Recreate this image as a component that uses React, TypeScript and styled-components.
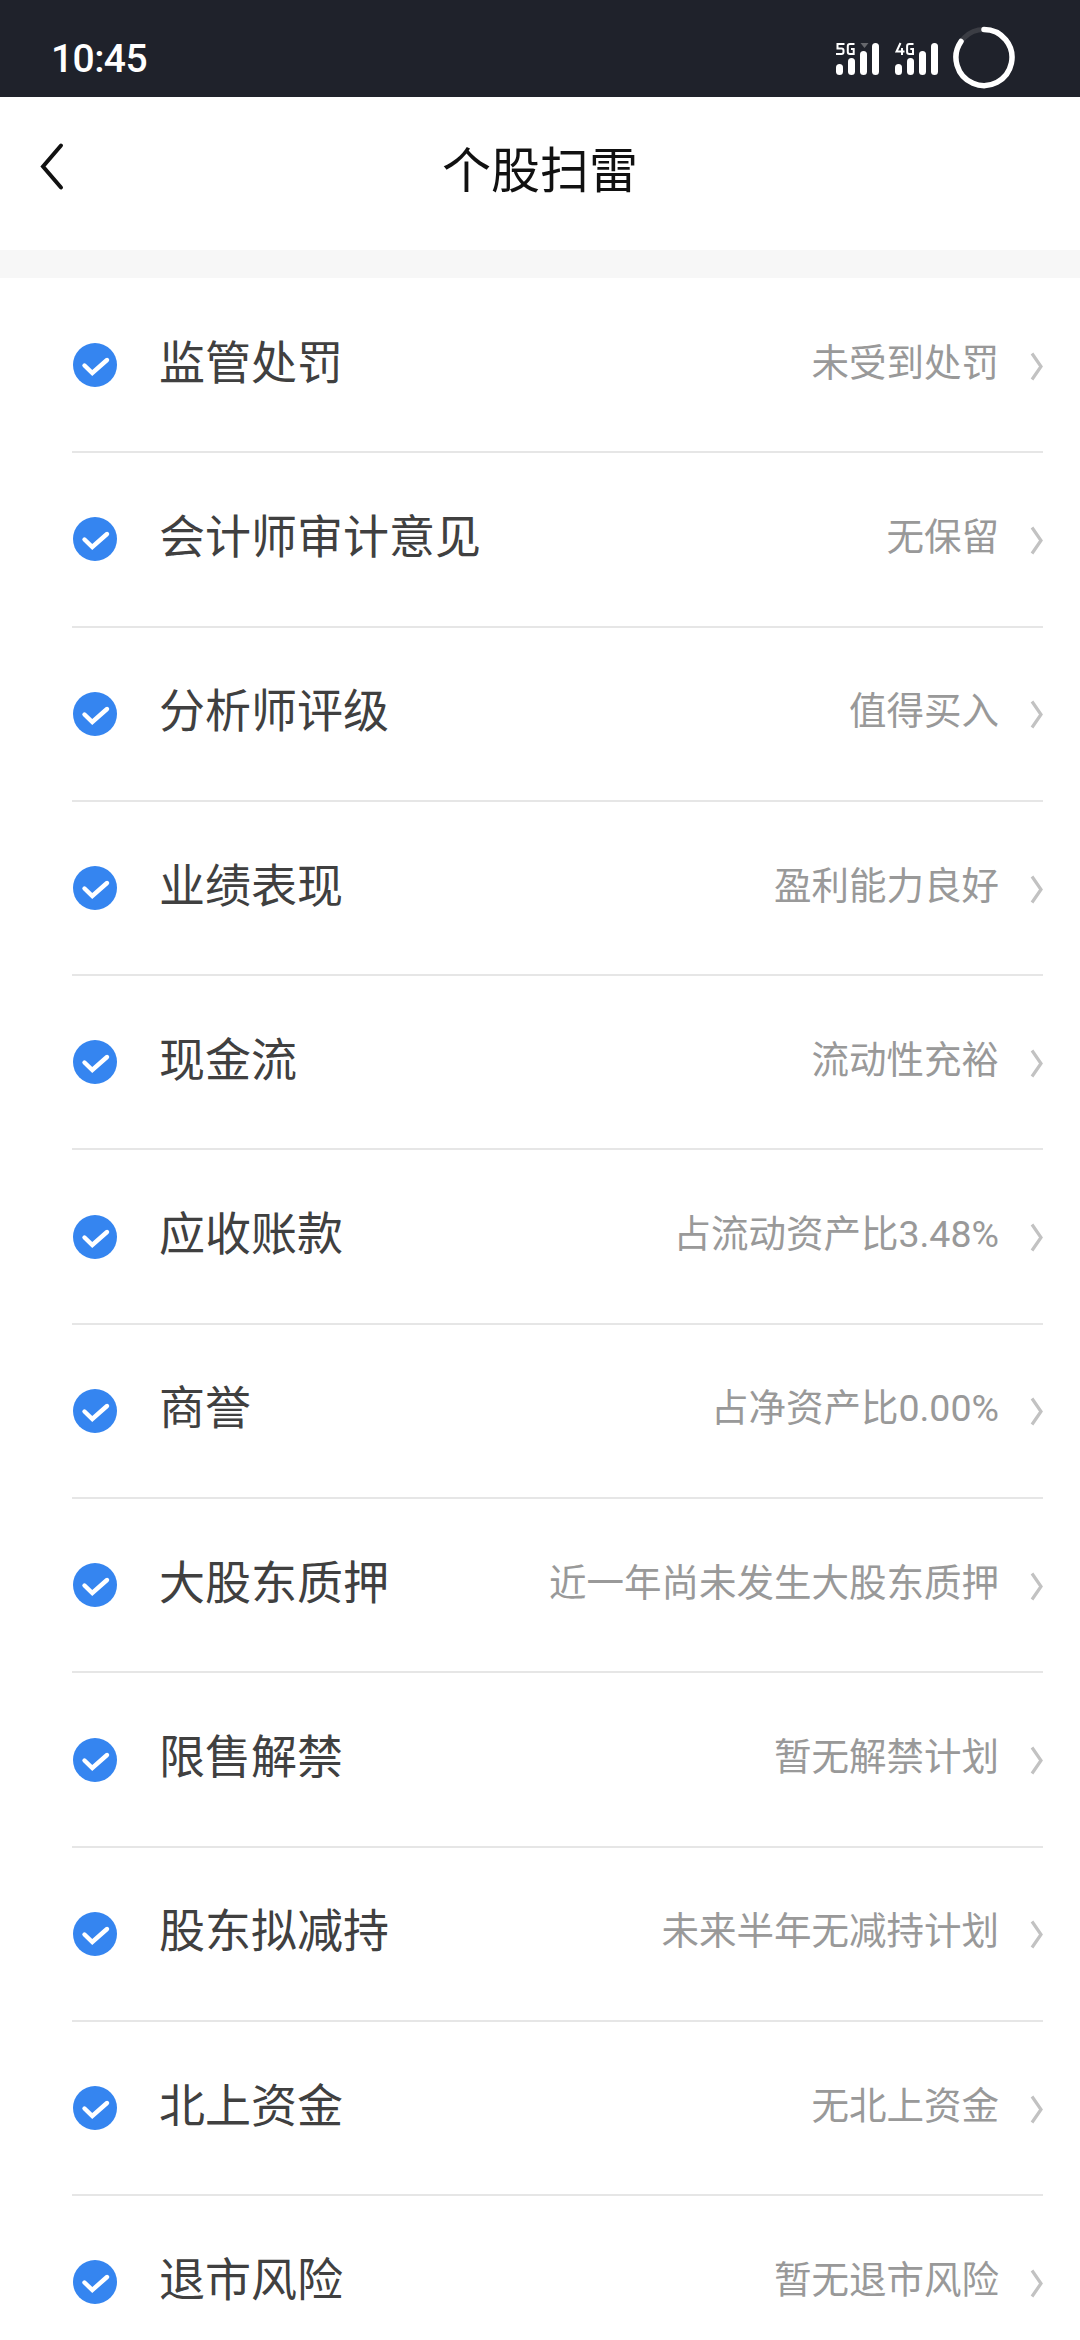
import React from "react";
import styled, { createGlobalStyle } from "styled-components";

const GlobalStyle = createGlobalStyle`
  body {
    margin: 0;
    background: #ffffff;
    font-family: Roboto, "Noto Sans CJK SC", sans-serif;
  }
`;

const Screen = styled.div`
  width: 1080px;
  height: 2340px;
  overflow: hidden;
  display: flex;
  flex-direction: column;
  background: #ffffff;
`;

const StatusBar = styled.header`
  box-sizing: border-box;
  flex: none;
  height: 97px;
  padding: 20px 65px 0 51px;
  display: flex;
  align-items: flex-start;
  justify-content: space-between;
  background: #1f222b;
  color: #ffffff;
`;

const Clock = styled.time`
  font-size: 39px;
  line-height: 46px;
  font-weight: 500;
  letter-spacing: -0.6px;
  padding-top: 16px;
`;

const StatusIcons = styled.svg`
  display: block;
  width: 184px;
  height: 72px;
`;

const NavBar = styled.nav`
  flex: none;
  height: 153px;
  display: grid;
  grid-template-columns: 120px 1fr 120px;
  align-items: start;
`;

const BackButton = styled.button`
  display: block;
  padding: 44px 0 0 38px;
  border: 0;
  background: none;
  svg {
    display: block;
  }
`;

const Title = styled.h1`
  margin: 0;
  padding-top: 39px;
  text-align: center;
  font-size: 49px;
  line-height: 72px;
  font-weight: 400;
  color: #111111;
`;

const Divider = styled.div`
  flex: none;
  height: 28px;
  background: #f7f7f7;
`;

const List = styled.ul`
  list-style: none;
  margin: 0;
  padding: 1px 37px 0 72px;
`;

const Row = styled.li`
  box-sizing: border-box;
  height: 174.3px;
  display: flex;
  align-items: center;
  border-bottom: 2px solid #e6e6e6;
`;

const CheckIcon = styled.svg`
  flex: none;
  width: 46px;
  height: 46px;
`;

const Label = styled.span`
  margin-left: 41px;
  font-size: 46px;
  line-height: 68px;
  padding-bottom: 5px;
  color: #404040;
`;

const Value = styled.span`
  margin-left: auto;
  font-size: 37.5px;
  line-height: 56px;
  padding-bottom: 5px;
  color: #999999;
`;

const Arrow = styled.svg`
  flex: none;
  width: 14px;
  height: 30px;
  margin: 1px 0 0 30px;
`;

const items: [string, string][] = [
  ["监管处罚", "未受到处罚"],
  ["会计师审计意见", "无保留"],
  ["分析师评级", "值得买入"],
  ["业绩表现", "盈利能力良好"],
  ["现金流", "流动性充裕"],
  ["应收账款", "占流动资产比3.48%"],
  ["商誉", "占净资产比0.00%"],
  ["大股东质押", "近一年尚未发生大股东质押"],
  ["限售解禁", "暂无解禁计划"],
  ["股东拟减持", "未来半年无减持计划"],
  ["北上资金", "无北上资金"],
  ["退市风险", "暂无退市风险"],
];

const bars = [
  { x: 0, top: 44 },
  { x: 12, top: 38 },
  { x: 24, top: 31 },
  { x: 36, top: 23 },
];

function SignalBars({ x }: { x: number }) {
  return (
    <g fill="#ffffff">
      {bars.map((b) => (
        <rect key={b.x} x={x + b.x} y={b.top} width={7} height={55 - b.top} rx={3.5} />
      ))}
    </g>
  );
}

export default function App() {
  return (
    <>
      <GlobalStyle />
      <Screen>
        <StatusBar>
          <Clock>10:45</Clock>
          <StatusIcons viewBox="0 0 184 72" aria-hidden="true">
            <path d="M29.500 23h8l-4 5z" fill="#66686d" />
            <SignalBars x={5} />
            <SignalBars x={64} />
            <g fill="none" stroke="#ffffff" strokeWidth="2">
              <path d="M13.500 24H6.500v4.500H10.500Q12.500 28.500 12.500 30.500V32Q12.500 34 10.500 34H5" />
              <path d="M23.500 24H19Q16.800 24 16.800 26V32Q16.800 34 19 34H22.700V29H20" />
              <path d="M69.500 23L65.500 31.500H73.500M71 28V35" />
              <path d="M82.500 24H78.300Q76.100 24 76.100 26V32Q76.100 34 78.300 34H82V29H79.300" />
            </g>
            <circle cx="153" cy="37.500" r="28" fill="none" stroke="#3b3d44" strokeWidth="5" />
            <path
              d="M153 9.500A28 28 0 1 1 130 21.500"
              fill="none"
              stroke="#ffffff"
              strokeWidth="5.500"
              strokeLinecap="round"
            />
          </StatusIcons>
        </StatusBar>
        <NavBar>
          <BackButton aria-label="返回">
            <svg width="28" height="52" viewBox="0 0 28 52">
              <path
                d="M23 4.500L5 25.500L23 46.500"
                fill="none"
                stroke="#111111"
                strokeWidth="4"
                strokeLinecap="round"
              />
            </svg>
          </BackButton>
          <Title>个股扫雷</Title>
        </NavBar>
        <Divider />
        <List>
          {items.map(([label, value]) => (
            <Row key={label}>
              <CheckIcon viewBox="0 0 46 46" aria-hidden="true">
                <circle cx="23" cy="23" r="22" fill="#3585f0" />
                <path
                  d="M12.500 23.500L20.300 31L35 18"
                  fill="none"
                  stroke="#ffffff"
                  strokeWidth="4.400"
                  strokeLinecap="round"
                  strokeLinejoin="miter"
                />
              </CheckIcon>
              <Label>{label}</Label>
              <Value>{value}</Value>
              <Arrow viewBox="0 0 14 30" aria-hidden="true">
                <path d="M3 2.500L12 15.500L3 28.500" fill="none" stroke="#c2c2c2" strokeWidth="3.200" />
              </Arrow>
            </Row>
          ))}
        </List>
      </Screen>
    </>
  );
}
